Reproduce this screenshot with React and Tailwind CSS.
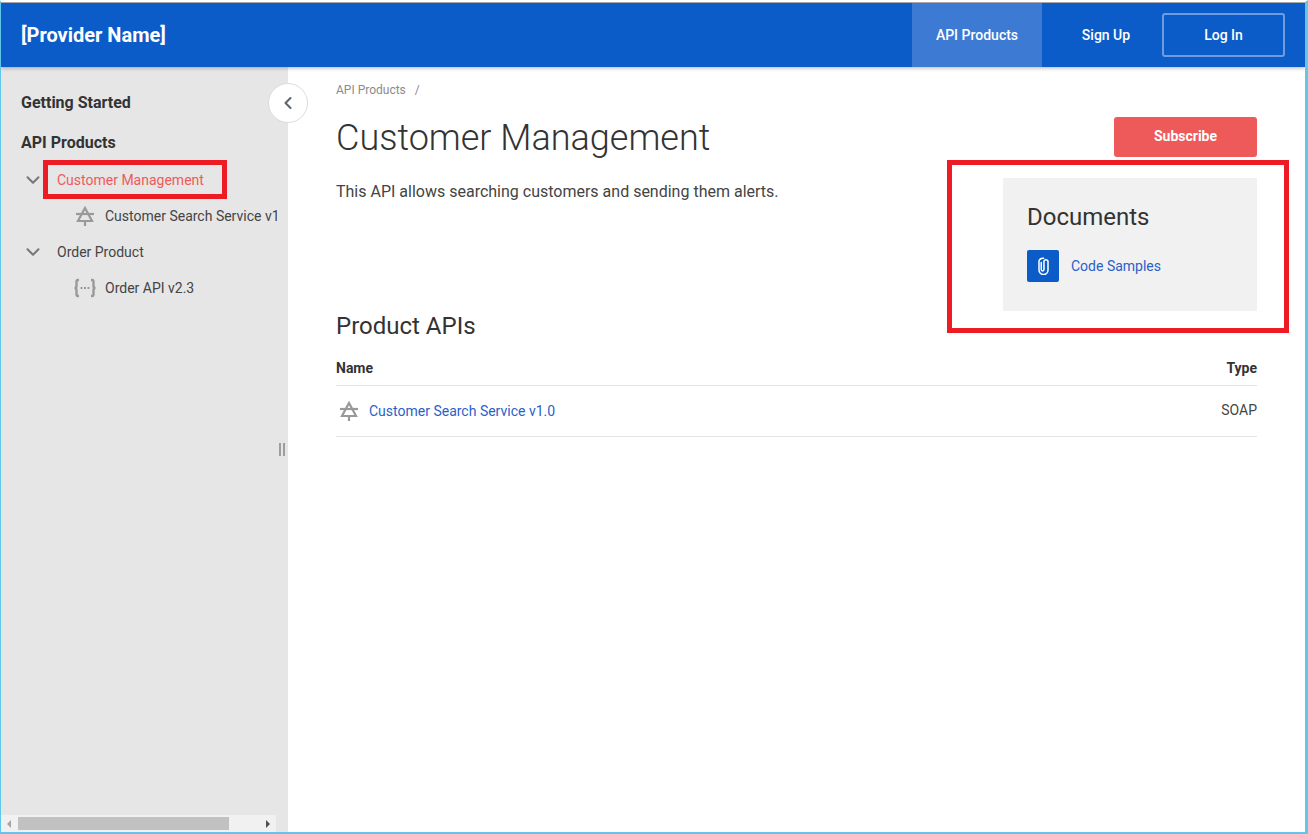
// API product detail page of the provider portal, with the review markers on top.
import { ChevronDown, ChevronLeft } from 'lucide-react';

const FONT = 'font-["Roboto",sans-serif]';

function SoapIcon({ className = '' }) {
  return (
    <svg viewBox="0 0 20 20" width="20" height="20" fill="none" stroke="#999" strokeWidth="2.2" className={className}>
      <path d="M10 2 L17 15 H3 Z" />
      <path d="M1 8 H19" />
      <path d="M10 15 V20" />
    </svg>
  );
}

function RestIcon({ className = '' }) {
  return (
    <svg viewBox="0 0 24 20" width="24" height="20" fill="none" stroke="#999" strokeWidth="2.4" className={className}>
      <path d="M6 2 H5 Q3.5 2 3.5 4 V8 Q3.5 10 1.5 10 Q3.5 10 3.5 12 V16 Q3.5 18 5 18 H6" />
      <path d="M18 2 H19 Q20.5 2 20.5 4 V8 Q20.5 10 22.5 10 Q20.5 10 20.5 12 V16 Q20.5 18 19 18 H18" />
      <path d="M7.5 10 H9.5 M11 10 H13 M14.5 10 H16.5" strokeWidth="2" />
    </svg>
  );
}

function ClipIcon() {
  return (
    <svg viewBox="0 0 12 20" width="11" height="18" fill="none" stroke="#fff" strokeWidth="1.7" strokeLinecap="round">
      <path d="M3.5 6 V14 A1.5 1.5 0 0 0 6.5 14 V4.5 A2.5 2.5 0 0 1 11 4.5 V14.5 A5 5 0 0 1 1 14.5 V4.5 A4 4 0 0 1 6 1.5" />
    </svg>
  );
}

function TreeRow({ label, active }) {
  return (
    <div className="flex h-9 items-center pl-[21px]">
      <ChevronDown size={22} strokeWidth={2.2} className="text-[#77777b]" />
      <span className={`ml-[13px] text-sm ${active ? 'text-[#ee5a5a]' : 'text-[#444]'}`}>{label}</span>
    </div>
  );
}

function ApiRow({ icon, label }) {
  return (
    <div className="flex h-9 items-center whitespace-nowrap">
      <span className="flex w-[104px] shrink-0 justify-end pr-[8px]">{icon}</span>
      <span className="text-sm text-[#444]">{label}</span>
    </div>
  );
}

export default function App() {
  return (
    <div className={`${FONT} relative flex h-[834px] w-[1308px] flex-col overflow-hidden border-t-2 border-r-[3px] border-b-2 border-l border-t-white border-r-[#62c6ea] border-b-[#62c6ea] border-l-[#62c6ea] bg-white text-[#333]`}>
      <div className="h-px shrink-0 bg-[#b4b4b4]" />
      <header className="relative z-10 flex h-16 shrink-0 items-center justify-between bg-[#0b5cc9] shadow-[0_1px_4px_rgba(0,0,0,0.3)]">
        <div className="pl-5 text-xl font-bold text-white">[Provider Name]</div>
        <nav className="flex h-full items-center pr-5 text-sm font-medium text-white">
          <a className="flex h-full w-[130px] items-center justify-center bg-[#3c7ad4]">API Products</a>
          <a className="flex h-full w-[120px] items-center justify-center pl-2">Sign Up</a>
          <a className="flex h-11 w-[123px] items-center justify-center rounded-[3px] border-2 border-[#6d9de0]">Log In</a>
        </nav>
      </header>

      <div className="flex min-h-0 flex-1">
        <aside className="relative flex w-[287px] shrink-0 flex-col bg-[#e6e6e6]">
          <div className="mr-[11px] flex-1 overflow-hidden pt-[16px]">
            <div className="flex h-10 items-center pl-5 text-base font-bold text-[#333]">Getting Started</div>
            <div className="flex h-[39px] items-center pl-5 text-base font-bold text-[#333]">API Products</div>
            <TreeRow label="Customer Management" active />
            <ApiRow icon={<SoapIcon className="mr-[2px]" />} label="Customer Search Service v1.0" />
            <TreeRow label="Order Product" />
            <ApiRow icon={<RestIcon />} label="Order API v2.3" />
          </div>

          <div className="mr-[12px] flex h-[17px] items-center bg-[#f1f1f1]">
            <span className="ml-[6px] h-0 w-0 border-y-4 border-r-4 border-y-transparent border-r-[#a3a3a3]" />
            <span className="ml-[7px] h-[13px] w-[211px] bg-[#c1c1c1]" />
            <span className="ml-[37px] h-0 w-0 border-y-4 border-l-4 border-y-transparent border-l-[#505050]" />
          </div>

          <button className="absolute top-4 -right-5 z-10 flex h-10 w-10 items-center justify-center rounded-full border border-[#dcdcdc] bg-white text-[#5c6670]">
            <ChevronLeft size={20} strokeWidth={2.5} />
          </button>
          <div className="absolute top-[376px] right-[3px] flex gap-[2px]">
            <span className="h-[13px] w-[2px] bg-[#9d9d9d]" />
            <span className="h-[13px] w-[2px] bg-[#9d9d9d]" />
          </div>
        </aside>

        <main className="min-w-0 flex-1 pt-[16px] pr-[48px] pl-[48px]">
          <div className="flex h-[14px] items-center gap-[9px] text-xs text-[#8b8b8b]">
            <span>API Products</span>
            <span>/</span>
          </div>

          <div className="mt-[19px] flex items-start justify-between">
            <h1 className="text-[36px] leading-[45px] font-light text-[#333]">Customer Management</h1>
            <button className="mt-[1px] h-10 w-[143px] rounded-[3px] bg-[#ee5a5a] pb-[2px] text-sm font-bold text-white">Subscribe</button>
          </div>

          <div className="mt-[16px] flex items-start justify-between">
            <p className="mt-[3px] text-base leading-6 text-[#444]">This API allows searching customers and sending them alerts.</p>
            <section className="mt-[1px] h-[133px] w-[254px] bg-[#f1f1f1] px-6 pt-[24px]">
              <h2 className="text-2xl leading-[30px] text-[#333]">Documents</h2>
              <div className="mt-[18px] flex items-center gap-3">
                <span className="flex h-8 w-8 items-center justify-center rounded-[2px] bg-[#0b5cc9]">
                  <ClipIcon />
                </span>
                <a className="text-sm text-[#2b5fc9]">Code Samples</a>
              </div>
            </section>
          </div>

          <h2 className="mt-0 text-2xl leading-[30px] text-[#333]">Product APIs</h2>
          <table className="mt-[11px] w-full text-sm">
            <thead>
              <tr className="h-[33px] border-b border-[#e3e3e3] text-left">
                <th className="font-bold text-[#333]">Name</th>
                <th className="text-right font-bold text-[#333]">Type</th>
              </tr>
            </thead>
            <tbody>
              <tr className="h-[51px] border-b border-[#e3e3e3]">
                <td>
                  <span className="flex items-center gap-[10px] pl-[3px]">
                    <SoapIcon />
                    <a className="text-[#2b5fc9]">Customer Search Service v1.0</a>
                  </span>
                </td>
                <td className="pb-[2px] text-right text-[#444]">SOAP</td>
              </tr>
            </tbody>
          </table>
        </main>
      </div>

      {/* red review markers, part of the screenshot */}
      <div className="absolute top-[158px] left-[42px] z-20 h-[39px] w-[184px] border-[5px] border-[#ed1c24]" />
      <div className="absolute top-[158px] left-[946px] z-20 h-[173px] w-[342px] border-[5px] border-[#ed1c24]" />
    </div>
  );
}
